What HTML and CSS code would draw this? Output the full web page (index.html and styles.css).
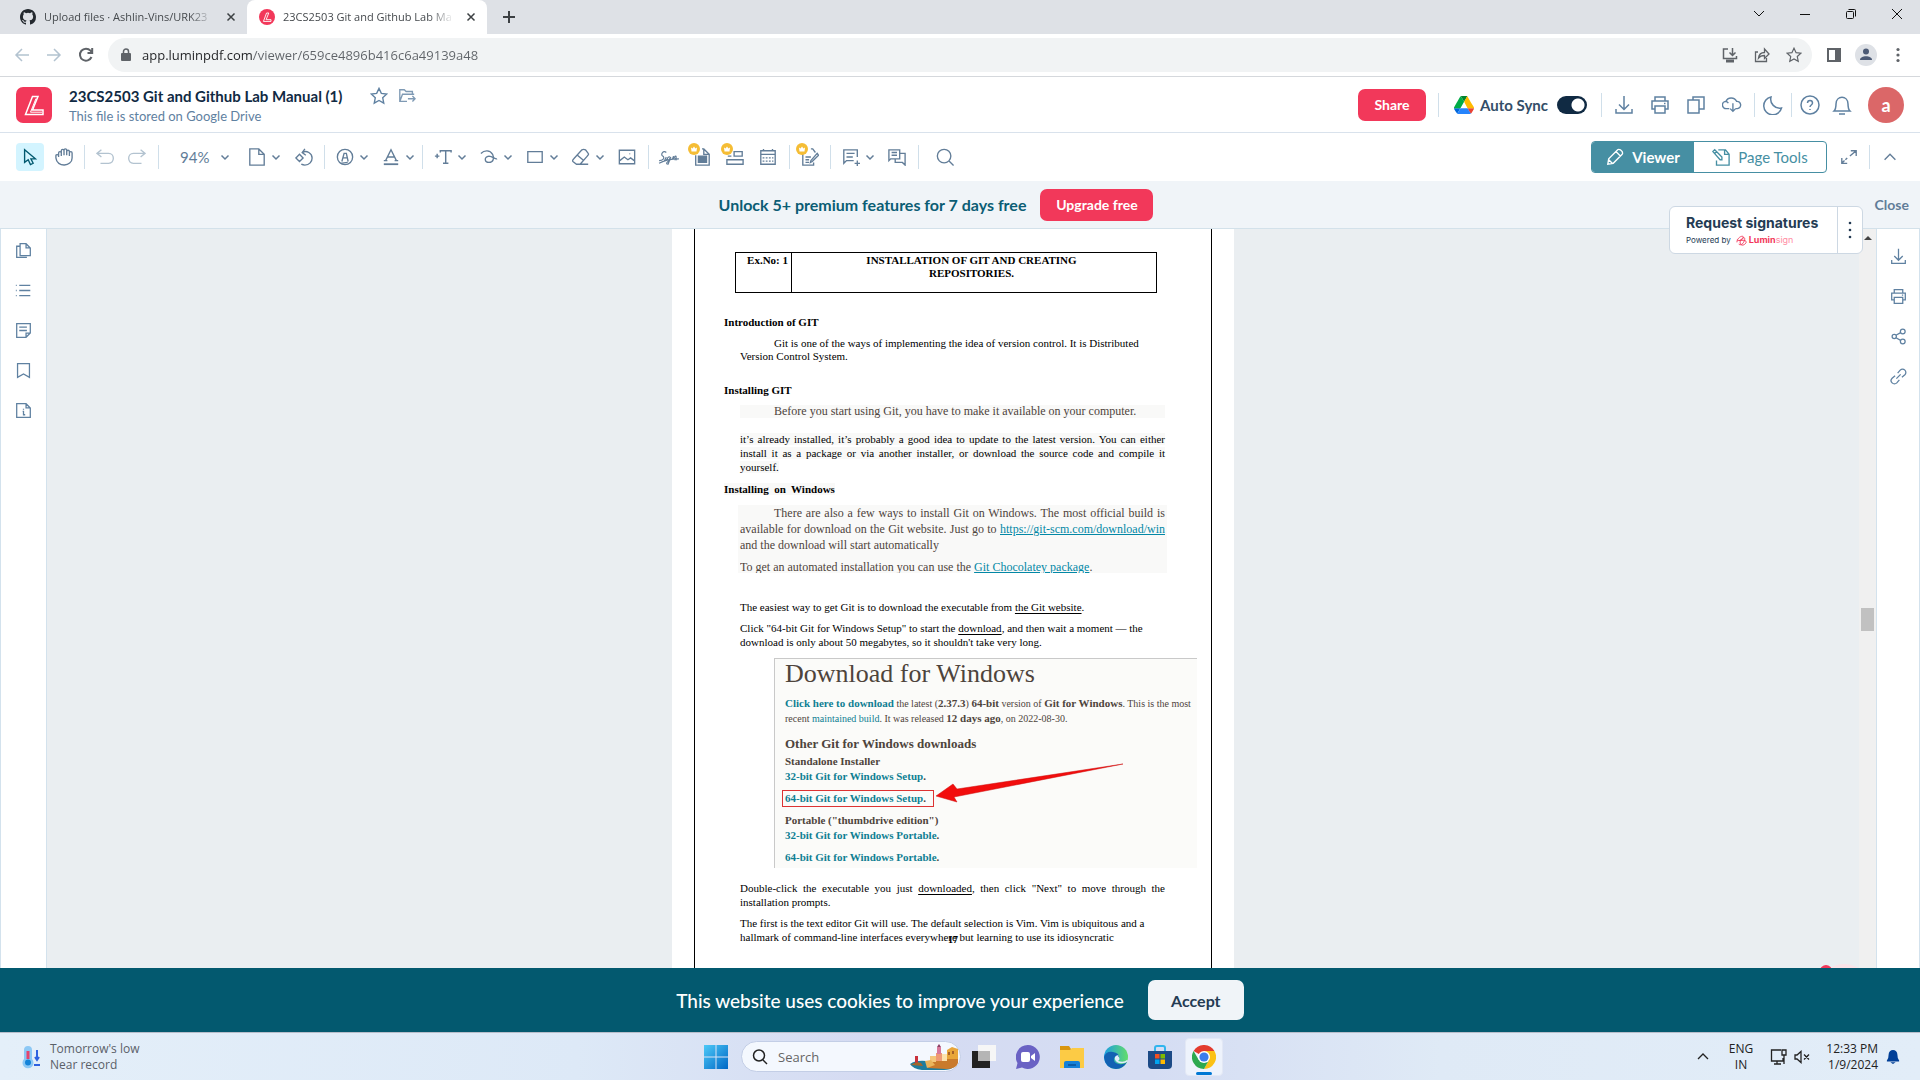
FILE: index.html
```html
<!DOCTYPE html>
<html lang="en">
<head>
<meta charset="utf-8">
<title>23CS2503 Git and Github Lab Manual (1)</title>
<link rel="stylesheet" href="styles.css">
</head>
<body>
<svg class="sprite" aria-hidden="true">
  <symbol id="chev" viewBox="0 0 10 10"><path d="M1.5 3.5 5 7l3.500-3.500"/></symbol>
  <symbol id="close" viewBox="0 0 10 10"><path d="m1.500 1.500 7 7m0-7-7 7"/></symbol>
  <symbol id="download" viewBox="0 0 20 20"><path d="M10 1v13M5 9.500l5 5 5-5M2 14v4h16v-4"/></symbol>
  <symbol id="printer" viewBox="0 0 20 20"><path d="M5 6V2h10v4M5 14H2V6h16v8h-3M5 11h10v7H5zM14 8.500h1.500"/></symbol>
  <symbol id="star" viewBox="0 0 20 20"><path d="m10 1.500 2.600 5.600 6 .700-4.500 4.100 1.200 6L10 15l-5.300 2.900 1.200-6L1.400 7.800l6-.700z"/></symbol>
  <symbol id="crown" viewBox="0 0 12 12"><circle cx="6" cy="6" r="6" fill="#f5bd35" stroke="none"/><path d="M3 4.500 4.600 5.500 6 3.500l1.400 2L9 4.500 8.500 8.500h-5z" fill="#fff" stroke="none"/></symbol>
</svg>

<nav class="tabs" aria-label="Browser tabs">
  <div class="tab">
    <svg class="fav" viewBox="0 0 16 16"><path fill="#24292f" stroke="none" d="M8 0C3.580 0 0 3.580 0 8c0 3.540 2.290 6.530 5.470 7.590.400.070.550-.170.550-.380 0-.190-.010-.820-.010-1.490-2.010.370-2.530-.490-2.690-.940-.090-.230-.480-.940-.820-1.130-.280-.150-.680-.520-.010-.530.630-.010 1.080.580 1.230.820.720 1.210 1.870.870 2.330.660.070-.520.280-.870.510-1.070-1.780-.200-3.640-.890-3.640-3.950 0-.870.310-1.590.820-2.150-.080-.200-.360-1.020.080-2.120 0 0 .670-.210 2.200.820a7.600 7.600 0 0 1 4 0c1.530-1.040 2.200-.820 2.200-.820.440 1.100.160 1.920.080 2.120.510.560.820 1.270.820 2.150 0 3.070-1.870 3.750-3.650 3.950.290.250.540.730.540 1.480 0 1.070-.010 1.930-.010 2.200 0 .210.150.460.550.380A8 8 0 0 0 16 8c0-4.420-3.580-8-8-8z"/></svg>
    <span class="tab-text">Upload files · Ashlin-Vins/URK23</span>
    <button class="x" aria-label="Close tab"><svg><use href="#close"/></svg></button>
  </div>
  <div class="tab active">
    <svg class="fav" viewBox="0 0 36 36"><circle cx="18" cy="18" r="18" fill="#f2385a" stroke="none"/><path d="M17 9h5l-6 15h11v4H10z" stroke="#fff" stroke-width="2"/></svg>
    <span class="tab-text">23CS2503 Git and Github Lab Ma</span>
    <button class="x" aria-label="Close tab"><svg><use href="#close"/></svg></button>
  </div>
  <button class="newtab" aria-label="New tab"><svg viewBox="0 0 14 14"><path d="M7 1v12M1 7h12"/></svg></button>
  <div class="win">
    <button aria-label="Search tabs"><svg viewBox="0 0 12 12"><path d="m1 3 5 5 5-5"/></svg></button>
    <button aria-label="Minimize"><svg viewBox="0 0 12 12"><path d="M1 6.500h10"/></svg></button>
    <button aria-label="Restore"><svg viewBox="0 0 12 12"><rect x="1.500" y="3.500" width="7" height="7" rx="1"/><path d="M3.500 1.500h6a1 1 0 0 1 1 1v6"/></svg></button>
    <button aria-label="Close window"><svg viewBox="0 0 12 12"><path d="m1 1 10 10M11 1 1 11"/></svg></button>
  </div>
</nav>

<div class="address">
  <div class="navbtns">
    <button class="dim" aria-label="Back"><svg viewBox="0 0 16 16"><path d="M15 8H2m6-6L2 8l6 6"/></svg></button>
    <button class="dim" aria-label="Forward"><svg viewBox="0 0 16 16"><path d="M1 8h13M8 2l6 6-6 6"/></svg></button>
    <button aria-label="Reload"><svg viewBox="0 0 16 16"><path d="M13.500 10a6 6 0 1 1-1-6.300L14 5.500M14.200 1v5H9.500" stroke-width="2"/></svg></button>
  </div>
  <div class="omnibox">
    <svg class="lock" viewBox="0 0 12 14"><rect x="1" y="5" width="10" height="8" rx="1" fill="#5f6368" stroke="none"/><path d="M3.500 6V3.500a2.500 2.500 0 0 1 5 0V6"/></svg>
    <input class="url" type="text" aria-label="Address" value="app.luminpdf.com/viewer/659ce4896b416c6a49139a48">
    <button aria-label="Install app"><svg viewBox="0 0 16 16"><path d="M6 2H1.500v9.500h13V9M10.500 1v7M7.500 5.500l3 3 3-3"/><path d="M4 14h8" stroke-width="3"/></svg></button>
    <button aria-label="Share page"><svg viewBox="0 0 16 16"><path d="M4 5H1.500v9.500h11V11M4.500 11c.500-4 3-5.500 6-5.500V2L15 7l-4.500 4.500V8.500c-3 0-4.500.500-6 2.500z" stroke-width="1.300"/></svg></button>
    <button aria-label="Bookmark"><svg><use href="#star"/></svg></button>
  </div>
  <div class="navbtns end">
    <button aria-label="Side panel"><svg viewBox="0 0 16 16"><path d="M2 2h12v12H2z" stroke-width="2"/><path d="M9 2h5v12H9z" fill="#5f6368" stroke="none"/></svg></button>
    <button aria-label="Profile"><svg class="person" viewBox="0 0 22 22"><circle cx="11" cy="11" r="11" fill="#dee1e6" stroke="none"/><circle cx="11" cy="7.500" r="3" fill="#4c5a75" stroke="none"/><path d="M5 16c0-5 12-5 12 0z" fill="#4c5a75" stroke="none"/></svg></button>
    <button aria-label="Menu"><svg viewBox="0 0 16 16"><g fill="#5f6368" stroke="none"><circle cx="8" cy="2.500" r="1.600"/><circle cx="8" cy="8" r="1.600"/><circle cx="8" cy="13.500" r="1.600"/></g></svg></button>
  </div>
</div>

<header class="appbar">
  <a class="logo" href="#" aria-label="Lumin"><svg viewBox="0 0 36 36"><path d="M16.500 9.500H22L16.500 23H27v4.500H9.500z" stroke="#fff" stroke-width="1.500"/><path d="m20 11.500-5.500 13.700H26" stroke="#fff" stroke-width="1"/></svg></a>
  <div class="doc">
    <div class="doc-top"><h1>23CS2503 Git and Github Lab Manual (1)</h1>
      <button aria-label="Star"><svg><use href="#star"/></svg></button>
      <button aria-label="Move"><svg viewBox="0 0 20 20"><path d="M10 16H2V3h5l2 2h7v3M2 16 5 8h13M11 13h8m-3-3 3 3-3 3" opacity=".8"/></svg></button>
    </div>
    <p>This file is stored on Google Drive</p>
  </div>
  <button class="share">Share</button>
  <i class="sep tall"></i>
  <svg class="drive" viewBox="0 0 87 78"><g stroke="none"><path fill="#0066da" d="m7 67 4 6c1 2 2 3 3 4l14-24H0c0 2 0 3 1 4z"/><path fill="#00ac47" d="M44 25 30 1c-2 1-3 2-4 3L1 48c-1 2-1 3-1 5h28z"/><path fill="#ea4335" d="M73 77c2-1 3-2 4-4l9-16c1-1 1-3 1-4H59l6 12z"/><path fill="#00832d" d="M44 25 58 1c-2-1-3-1-5-1H34c-1 0-3 0-4 1z"/><path fill="#2684fc" d="M59 53H28L14 77c1 1 3 1 4 1h51c2 0 3 0 4-1z"/><path fill="#ffba00" d="M73 27 60 4c-1-1-2-2-3-3L44 25l15 28h28c0-2 0-3-1-5z"/></g></svg>
  <label class="sync">Auto Sync <input type="checkbox" checked></label>
  <i class="sep tall"></i>
  <div class="acts">
    <button aria-label="Download"><svg><use href="#download"/></svg></button>
    <button aria-label="Print"><svg><use href="#printer"/></svg></button>
    <button aria-label="Copy"><svg viewBox="0 0 20 20"><path d="M2 5h11v13H2zM7 5V2h11v12h-5"/></svg></button>
    <button aria-label="Cloud save"><svg viewBox="0 0 22 20"><path d="M8 14H5a4 4 0 0 1-1-8c1 0 2 .500 3 2M4.500 6C6 1 14 1 16 6a4 4 0 0 1 1 8h-2M12 8v9m-3-3 3 3 3-3"/></svg></button>
  </div>
  <i class="sep tall"></i>
  <button class="one" aria-label="Dark mode"><svg viewBox="0 0 20 20"><path d="M8 2a9 9 0 0 0 10.500 11A9 9 0 1 1 8 2z"/></svg></button>
  <i class="sep tall"></i>
  <div class="acts tight">
    <button aria-label="Help"><svg viewBox="0 0 20 20"><circle cx="10" cy="10" r="9"/><path d="M7.500 8c0-3.500 5-3.500 5 0 0 2-2.500 2-2.500 4M10 14v1"/></svg></button>
    <button aria-label="Notifications"><svg viewBox="0 0 20 20"><path d="M2 16h16c-2-2-2-4-2-7 0-9-12-9-12 0 0 3 0 5-2 7zM7 19h6"/></svg></button>
  </div>
  <button class="me">a</button>
</header>

<div class="tools" role="toolbar">
  <button class="t on" aria-label="Pointer"><svg viewBox="0 0 20 20"><path d="M4 2v14l4-3 2.500 5.500 3-1.500-2.500-5h5z"/></svg></button>
  <button class="t" aria-label="Pan"><svg viewBox="0 0 20 20"><path d="M4 10V5.500a1.500 1.500 0 0 1 3 0V3a1.500 1.500 0 0 1 3 0v-.500a1.500 1.500 0 0 1 3 0V4a1.500 1.500 0 0 1 3 0v1.500a1.500 1.500 0 0 1 3 0V11c0 10-17 11-18 0V8.500C1 7 4 7 4 9M7 5v4M10 3v5M13 3v5M16 5v4"/></svg></button>
  <i class="sep"></i>
  <div class="grp g4 dim">
    <button class="t" aria-label="Undo"><svg viewBox="0 0 20 20"><path d="M6 2 1 6l5 4M1.500 6H14c7 0 7 11 0 11H5"/></svg></button>
    <button class="t" aria-label="Redo"><svg viewBox="0 0 20 20"><path d="m14 2 5 4-5 4M18.500 6H6c-7 0-7 11 0 11h9"/></svg></button>
  </div>
  <i class="sep"></i>
  <label class="zoom"><select aria-label="Zoom"><option>94%</option></select><svg class="c"><use href="#chev"/></svg></label>
  <button class="t d" aria-label="Page"><svg viewBox="0 0 20 20"><path d="M2 1h10l6 6v12H2zM12 1v6h6"/></svg><svg class="c"><use href="#chev"/></svg></button>
  <button class="t" aria-label="Rotate"><svg viewBox="0 0 20 20"><path d="m1 11 4-4 4 4-4 4zM8 5c5-3 11 1 11 6 0 4-3 8-8 8-2 0-3-.500-4-1M11 1 8 5l4 3"/></svg></button>
  <i class="sep"></i>
  <div class="grp">
    <button class="t d" aria-label="Highlight"><svg viewBox="0 0 20 20"><circle cx="10" cy="10" r="8.500"/><path d="M6.500 15 9 6h2.500l2 9M8 11h5M5 17l8-1"/></svg><svg class="c"><use href="#chev"/></svg></button>
    <button class="t d" aria-label="Text colour"><svg viewBox="0 0 20 20"><path d="m4 14 6-12 6 12M6 10h8M2 14h4m8 0h4"/><path d="M2 18h16" stroke-width="2"/></svg><svg class="c"><use href="#chev"/></svg></button>
  </div>
  <i class="sep"></i>
  <div class="grp">
    <button class="t d" aria-label="Add text"><svg viewBox="0 0 20 20"><path d="M1 9h5M3.500 6.500v5M7 5V3h12v2M13 3v14M10 17h6" stroke-width="1.600"/></svg><svg class="c"><use href="#chev"/></svg></button>
    <button class="t d" aria-label="Draw"><svg viewBox="0 0 20 20"><path d="M1 6c4-4 10-4 13 1 2 4 1 9-4 9S4 10 10 9c4 0 7 4 9 3"/></svg><svg class="c"><use href="#chev"/></svg></button>
    <button class="t d" aria-label="Shape"><svg viewBox="0 0 20 20"><path d="M2 4h16v12H2z"/></svg><svg class="c"><use href="#chev"/></svg></button>
    <button class="t d" aria-label="Eraser"><svg viewBox="0 0 20 20"><path d="m2 12 9-10q2-1 4 0l3 4q1 1-1 3l-8 9H5l-4-3q-1-1 1-3zM6 8l7 6M9 18h9"/></svg><svg class="c"><use href="#chev"/></svg></button>
    <button class="t" aria-label="Image"><svg viewBox="0 0 20 20"><path d="M1.500 2.500h17v15h-17zM2 14l5-4 4 3 3-2 4 3M13 6v1"/></svg></button>
  </div>
  <i class="sep"></i>
  <div class="grp g5">
    <button class="t" aria-label="Sign"><svg class="wide" viewBox="0 0 24 20"><path d="M9 5C6 2 2 7 5 9s0 5-4 5M1 17C8 13 15 12 23 12M9 10l-2 4q1 1 3-2M13 10c-3-1-4 4-1 3l2-3-3 8c-4 0 0-4 5-6l1-3-1 4 3-4q2 0 0 4h2" stroke-width="1.300"/></svg></button>
    <button class="t crowned" aria-label="Protect"><svg viewBox="0 0 20 20"><path d="M3 8v11h15V7l-6-6h-2M12 1v6h6" /><path d="M6 9h9v7H6z" fill="#627d98"/></svg><svg class="crown"><use href="#crown"/></svg></button>
    <button class="t crowned" aria-label="Form fields"><svg viewBox="0 0 20 20"><path d="M9 4h9v5H9zM1 13h18v5H1zM2 9h4"/></svg><svg class="crown"><use href="#crown"/></svg></button>
    <button class="t" aria-label="Date"><svg viewBox="0 0 20 20"><path d="M2 3h16v15H2zM2 7h16M5 1v3M15 1v3"/><path d="M4 11h12M4 14.500h12" stroke-dasharray="2 1.500"/></svg></button>
  </div>
  <i class="sep"></i>
  <button class="t crowned" aria-label="Edit text"><svg viewBox="0 0 20 20"><path d="M2 6v13h12v-3M11 1h2l3 4M5 10h6M5 13h4M5 16h4M11 14l7-8 1.500 2-7 7-2 1z"/></svg><svg class="crown"><use href="#crown"/></svg></button>
  <i class="sep"></i>
  <div class="grp">
    <button class="t d" aria-label="Comment"><svg viewBox="0 0 20 20"><path d="M13 14H5l-3 3V2h15v8M5 6h9M5 10h7M17 14v6M14 17h6"/></svg><svg class="c"><use href="#chev"/></svg></button>
    <button class="t" aria-label="Comments"><svg viewBox="0 0 20 20"><path d="M5 12H3l-2 2V2h12v10H5M4 5h6M4 8h6M8 12v4h8l3 3V6h-6"/></svg></button>
  </div>
  <i class="sep"></i>
  <button class="t find" aria-label="Search"><svg viewBox="0 0 20 20"><circle cx="9" cy="9" r="7.500"/><path d="m14.500 14.500 5 5"/></svg></button>
  <div class="mode">
    <button class="viewer"><svg viewBox="0 0 20 20"><path d="m2 18 1-6L13 2q1-1 3 0l2 2q1 2 0 3L8 17zM11 4l5 5M3 13l4 4"/></svg>Viewer</button>
    <button class="pagetools"><svg viewBox="0 0 20 20"><path d="M5 14v5h14V7l-4-5H7M14 2v5h5M1 4l2-2 8 8v3H9zM3 6l2-2"/></svg>Page Tools</button>
  </div>
  <button class="one" aria-label="Full screen"><svg viewBox="0 0 20 20"><path d="M12 3h6v6M18 3l-7 6M8 17H2v-6M2 17l3-3m1-1 2-2"/></svg></button>
  <i class="sep"></i>
  <button class="t up" aria-label="Collapse"><svg viewBox="0 0 20 20"><path d="m4 13 6-6 6 6"/></svg></button>
</div>

<div class="promo">
  <span>Unlock 5+ premium features for 7 days free</span>
  <button class="upgrade">Upgrade free</button>
  <button class="dismiss">Close</button>
  <div class="signbox">
    <div class="sign-l"><b>Request signatures</b><small>Powered by <svg viewBox="0 0 12 12"><path d="M1 8c0-5 6-8 7-6S3 8 1 5m2 5c4 3 8-6 6-7S3 7 5 10s7-1 6-3-5-1-8-1" stroke="#f2385a" stroke-width="1"/></svg><em>Lumin<i>sign</i></em></small></div>
    <button aria-label="More"><svg viewBox="0 0 4 18"><g fill="#243b53" stroke="none"><circle cx="2" cy="2" r="1.300"/><circle cx="2" cy="9" r="1.300"/><circle cx="2" cy="16" r="1.300"/></g></svg></button>
  </div>
</div>

<main class="main">
  <aside class="rail left">
    <button aria-label="Pages"><svg viewBox="0 0 20 20"><path d="M6 2h7l5 5v9H6zM13 2v5h5M6 5H2v13h12"/></svg></button>
    <button aria-label="Outline"><svg viewBox="0 0 20 20"><path d="M5 4h13M5 10h13M5 16h13M1 4h1M1 10h1M1 16h1"/></svg></button>
    <button aria-label="Notes"><svg viewBox="0 0 20 20"><path d="M2 2h16v11l-5 5H2zM18 13h-5v5M5 6h9M5 10h9"/></svg></button>
    <button aria-label="Bookmarks"><svg viewBox="0 0 20 20"><path d="M3 2h14v16l-7-4-7 4z"/></svg></button>
    <button aria-label="Info"><svg viewBox="0 0 20 20"><path d="M2 2h11l5 5v11H2zM13 2v5h5M10 8v1M9 11h1v4h2"/></svg></button>
  </aside>
  <section class="canvas">
    <article class="page"><div class="frame">
      <table class="ex"><tr><th class="no">Ex.No: 1</th><th>INSTALLATION OF GIT AND CREATING<br>REPOSITORIES.</th></tr></table>
      <h2 class="h-intro">Introduction of GIT</h2>
      <p class="ind l13">Git is one of the ways of implementing the idea of version control. It is Distributed Version Control System.</p>
      <h2 class="h-inst">Installing GIT</h2>
      <p class="ind l13 cam tint">Before you start using Git, you have to make it available on your computer.</p>
      <p class="just upd"><span class="tint">it’s already installed, it’s probably a good idea to update to the latest version. You can either install it as a package or via another installer, or download the source code and compile it yourself.</span></p>
      <h2 class="h-win"><span class="tint">Installing&nbsp; on&nbsp; Windows</span></h2>
      <div class="note tint cam">
        <p class="ind just">There are also a few ways to install Git on Windows. The most official build is available for download on the Git website. Just go to <a href="#">https://git-scm.com/download/win</a> and the download will start automatically</p>
        <p class="cut">To get an automated installation you can use the <a href="#">Git Chocolatey package</a>.</p>
      </div>
      <p class="easy">The easiest way to get Git is to download the executable from <u>the Git website</u>.</p>
      <p>Click "64-bit Git for Windows Setup" to start the <u>download</u>, and then wait a moment — the download is only about 50 megabytes, so it shouldn't take very long.</p>
      <div class="shot">
        <h3>Download for Windows</h3>
        <p><a href="#"><b>Click here to download</b></a> the latest (<b>2.37.3</b>) <b>64-bit</b> version of <b>Git for Windows</b>. This is the most<br>recent <a href="#">maintained build</a>. It was released <b>12 days ago</b>, on 2022-08-30.</p>
        <h4>Other Git for Windows downloads</h4>
        <h5>Standalone Installer</h5>
        <h6><a href="#">32-bit Git for Windows Setup</a>.</h6>
        <h6 class="boxed"><a href="#">64-bit Git for Windows Setup</a>.</h6>
        <h5>Portable ("thumbdrive edition")</h5>
        <h6><a href="#">32-bit Git for Windows Portable</a>.</h6>
        <h6><a href="#">64-bit Git for Windows Portable</a>.</h6>
        <svg class="arrow" viewBox="0 0 190 44"><path d="M188 2 22 27l-4-5L1 34l21 6-3-5z" fill="#f20d0d" stroke="#c11" stroke-width=".5"/></svg>
      </div>
      <p class="just dbl">Double-click the executable you just <u>downloaded</u>, then click "Next" to move through the installation prompts.</p>
      <p class="last">The first is the text editor Git will use. The default selection is Vim. Vim is ubiquitous and a hallmark of command-line interfaces everywhere but learning to use its idiosyncratic</p>
      <b class="folio">17</b>
    </div></article>
    <i class="chat"></i>
  </section>
  <div class="scroll"><svg viewBox="0 0 8 5"><path d="M0 5 4 1l4 4z" fill="#444" stroke="none"/></svg><i></i></div>
  <aside class="rail right">
    <button aria-label="Download"><svg><use href="#download"/></svg></button>
    <button aria-label="Print"><svg><use href="#printer"/></svg></button>
    <button aria-label="Share"><svg viewBox="0 0 20 20"><circle cx="5" cy="10" r="2.500"/><circle cx="15" cy="4" r="2.800"/><circle cx="15" cy="16" r="2.800"/><path d="m7 8.500 5.500-3M7 11.500l5.500 3"/></svg></button>
    <button aria-label="Copy link"><svg viewBox="0 0 20 20"><path d="m7.500 12.500 5-5M9 6l3-3.500a3.500 3.500 0 0 1 5.500 5.500L14 11M11 14l-3 3.500A3.500 3.500 0 0 1 2.500 12L6 9"/></svg></button>
  </aside>
</main>

<div class="cookies"><span>This website uses cookies to improve your experience</span><button>Accept</button></div>

<footer class="taskbar">
  <div class="weather">
    <svg viewBox="0 0 20 24"><path d="M3 5a4 4 0 0 1 8 0v9a5.500 5.500 0 1 1-8 0z" fill="#8cc8f5" stroke="none"/><path d="M7 6v8" stroke="#e5446d" stroke-width="3"/><circle cx="7" cy="17.500" r="3" fill="#1583d8" stroke="none"/><path d="M16 5v9m-2-2 2 3 2-3M13 20h6" stroke="#2f62e0" stroke-width="2"/></svg>
    <span>Tomorrow's low<br>Near record</span>
  </div>
  <div class="apps">
    <button class="app" aria-label="Start"><svg viewBox="0 0 24 24"><defs><linearGradient id="w" x2="1" y2="1"><stop stop-color="#4cc9f8"/><stop offset="1" stop-color="#0067c5"/></linearGradient></defs><path d="M0 0h11.500v11.500H0zM12.500 0H24v11.500H12.500zM0 12.500h11.500V24H0zM12.500 12.500H24V24H12.500z" fill="url(#w)" stroke="none"/></svg></button>
    <label class="find-box"><svg class="mag" viewBox="0 0 16 16"><circle cx="7" cy="6.500" r="5.500"/><path d="m11 11 4 4"/></svg><input type="text" placeholder="Search" aria-label="Search">
      <svg class="town" viewBox="0 0 48 26"><g stroke="none"><path d="M0 20q6-4 16-3h32l-4 6q-4 3-10 3H12Q3 25 0 20z" fill="#1e7d9d"/><path d="M18 24q2-8 12-8l18-7v10q-2 6-12 6z" fill="#c97a2c"/><path d="M20 12h6v6h-6z" fill="#f3c77c"/><path d="M26 9h6v8h-6z" fill="#ef9a75"/><path d="M32 10h5v7h-5z" fill="#fbe2ad"/><path d="M37 6l5-3 6 2v10H37z" fill="#e9a63a"/><path d="M38 8h2v3h-2zM42 7h2v3h-2z" fill="#a5622a"/><path d="M27 3h4v7h-4z" fill="#d8799b"/><path d="M29 0l2 3h-4z" fill="#8b3f63"/><path d="M5 12h3v7H5z" fill="#c9313c"/><path d="M1 21q5-4 10-2l2 3z" fill="#a0672c"/><path d="M15 17l6-1 4 5-8 3z" fill="#eab45b"/></g></svg></label>
    <button class="app" aria-label="Task view"><svg viewBox="0 0 24 24"><g stroke="none"><path d="M6 0h18v16H6z" fill="#f6f6f6"/><path d="M0 6h18v17H0z" fill="#222"/><path d="M6 6h12v10H6z" fill="#b5b5b5"/></g></svg></button>
    <button class="app" aria-label="Chat"><svg viewBox="0 0 24 24"><g stroke="none"><path d="M12 0a12 12 0 1 1-6 22.500L0 24l1.500-6A12 12 0 0 1 12 0z" fill="#6a62c4"/><rect x="5" y="7" width="9" height="10" rx="2" fill="#fff"/><path d="m15 11 4-3v8l-4-3z" fill="#fff"/></g></svg></button>
    <button class="app" aria-label="File Explorer"><svg viewBox="0 0 24 24"><g stroke="none"><path d="M0 1h9l2 3h13v6H0z" fill="#d9960f"/><path d="M0 5h10l2-2h12v20H0z" fill="#fccb45"/><path d="M4 23v-5q0-2 2-2h12q2 0 2 2v5z" fill="#1681d8"/><path d="M8 19h8v2H8z" fill="#0c5ca8"/></g></svg></button>
    <button class="app" aria-label="Edge"><svg viewBox="0 0 24 24"><defs><linearGradient id="e" x2="1"><stop stop-color="#1b9de2"/><stop offset="1" stop-color="#63dd6a"/></linearGradient></defs><g stroke="none"><circle cx="12" cy="12" r="12" fill="url(#e)"/><path d="M0 12Q2 6 9 7q6 1 6 5-3-2-5 1-1 5 5 6 4 1 8-2-4 7-11 7Q1 23 0 12z" fill="#1261b3"/><path d="M14 11q3 3 0 5 6 2 9-1l1 1q-3 3-9 2-5-2-4-6 2-3 4-1z" fill="#e3ecfa"/></g></svg></button>
    <button class="app" aria-label="Store"><svg viewBox="0 0 24 24"><path d="M7 7V3q0-2 2-2h6q2 0 2 2v4" stroke="#30b5ee" stroke-width="2"/><path d="M0 6h24v14q0 4-4 4H4q-4 0-4-4z" fill="#1c4a86" stroke="none"/><g stroke="none"><path d="M7 9h4.500v4.500H7z" fill="#f25022"/><path d="M12.500 9H17v4.500h-4.500z" fill="#7fba00"/><path d="M7 14.500h4.500V19H7z" fill="#00a4ef"/><path d="M12.500 14.500H17V19h-4.500z" fill="#ffb900"/></g></svg></button>
    <button class="app current" aria-label="Chrome"><svg viewBox="0 0 24 24"><g stroke="none"><path d="M12 12 1.600 6A12 12 0 0 1 22.400 6z" fill="#e33b2e"/><path d="M12 12V6h10.400A12 12 0 0 1 12 24l5-9z" fill="#fbc116"/><path d="M12 12l5 3-5 9A12 12 0 0 1 1.600 6l5.200 9z" fill="#2da94f"/><circle cx="12" cy="12" r="6" fill="#fff"/><circle cx="12" cy="12" r="4.600" fill="#3b7ded"/></g></svg></button>
  </div>
  <div class="tray">
    <svg class="cu" viewBox="0 0 12 12"><path d="m1 8 5-5 5 5"/></svg>
    <span class="lang">ENG<br>IN</span>
    <svg class="net" viewBox="0 0 18 18"><path d="M11 2H1.500v11H13V10M7 13v3M4 16h7M12 2h4v5h-4zM14 7v9"/></svg>
    <svg class="vol" viewBox="0 0 18 14"><path d="M1 5h2l4-3.500v11L3 9H1zM10 4.500l5 5m0-5-5 5"/></svg>
    <span class="clock">12:33 PM<br>1/9/2024</span>
    <svg class="bell" viewBox="0 0 16 18"><path d="M1 13q2-2 2-7a5 5 0 0 1 10 0q0 5 2 7v1H1zM5 15h6l-3 2z" fill="#013f97" stroke="none"/></svg>
  </div>
</footer>
</body>
</html>
```
FILE: styles.css
```css
* { box-sizing: border-box; }
body {
  margin: 0;
  height: 100vh;
  display: flex;
  flex-direction: column;
  overflow: hidden;
  font-family: "Lato", "Open Sans", sans-serif;
  color: #102a43;
  background: #fff;
}
h1, h2, h3, h4, h5, h6, p { margin: 0; }
button, input, select { font: inherit; color: inherit; }
button {
  display: inline-flex; align-items: center; justify-content: center;
  border: 0; background: none; padding: 0; flex: none;
}
svg { fill: none; stroke: currentColor; stroke-width: 1.5; width: 20px; height: 20px; flex: none; }
.sprite { position: absolute; width: 0; height: 0; }

/* browser chrome */
.tabs { display: flex; height: 34px; flex: none; background: #dee1e6; font: 11px/16px "Open Sans", sans-serif; color: #45494d; }
.tab { display: flex; align-items: center; width: 240px; padding: 0 8px 0 12px; }
.tab:first-child { margin-left: 8px; width: 239px; }
.tab.active { background: #fff; border-radius: 8px 8px 0 0; }
.fav { width: 16px; height: 16px; margin-right: 8px; }
.tab-text { flex: 1; min-width: 0; overflow: hidden; white-space: nowrap; mask-image: linear-gradient(90deg, #000 85%, transparent); }
.x { width: 16px; height: 16px; margin-left: 9px; color: #3c4043; }
.x svg { width: 10px; height: 10px; }
.newtab { width: 44px; height: 34px; color: #3c4043; }
.newtab svg { width: 14px; height: 14px; stroke-width: 2; }
.win { display: flex; margin-left: auto; color: #111; }
.win button { width: 46px; height: 28px; }
.win svg { width: 12px; height: 12px; stroke-width: 1; }
.address { display: flex; align-items: center; height: 43px; flex: none; padding: 0 6px; border-bottom: 1px solid #d5d8dc; color: #5f6368; }
.navbtns { display: flex; }
.navbtns button { width: 32px; height: 32px; }
.navbtns svg { width: 16px; height: 16px; }
.navbtns .person { width: 22px; height: 22px; }
.dim { color: #b0bac3; }
.omnibox { display: flex; align-items: center; flex: 1; height: 34px; margin: 0 6px; padding: 0 2px 0 12px; border-radius: 17px; background: #f1f3f4; }
.omnibox button { width: 32px; height: 32px; }
.omnibox button svg { width: 16px; height: 16px; }
.lock { width: 12px; height: 14px; }
.url {
  flex: 1; min-width: 0; border: 0; outline: 0; padding: 0; margin-left: 10px; height: 24px;
  font: 13px/24px "Open Sans", sans-serif; color: transparent;
  background: linear-gradient(90deg, #202124 110px, #5f6368 110px); background-clip: text; -webkit-background-clip: text;
}

/* app header */
.appbar { display: flex; align-items: center; height: 56px; flex: none; padding: 0 16px; border-bottom: 1px solid #d9e2ec; color: #5f81a1; }
.logo { display: flex; border-radius: 7px; background: #f2385a; }
.logo svg { width: 36px; height: 36px; }
.doc { flex: 1; margin-left: 17px; }
.doc-top { display: flex; align-items: center; height: 22px; gap: 10px; }
.doc-top svg { width: 18px; height: 18px; }
.doc-top h1 { margin-right: 18px; font: 700 15px/22px "Lato", sans-serif; color: #102a43; }
.doc p { font-size: 13px; line-height: 18px; }
.share { width: 68px; height: 32px; border-radius: 7px; background: #f2385a; color: #fff; font-size: 14px; font-weight: 700; }
.sep { width: 1px; height: 24px; margin: 0 6px; background: #d0dfea; flex: none; }
.sep.tall { margin: 0 12px; }
.drive { width: 20px; height: 18px; margin: 0 6px 0 3px; }
.sync { display: flex; align-items: center; gap: 9px; margin-right: 2px; font-size: 15px; font-weight: 700; color: #334e68; }
.sync input { appearance: none; width: 30px; height: 18px; margin: 0; border-radius: 9px; background: radial-gradient(circle at 21px 9px, #fff 6px, #102a43 7px); }
.acts { display: flex; gap: 16px; }
.acts button { width: 20px; height: 28px; }
.acts.tight { gap: 12px; }
.appbar .one { width: 20px; }
.appbar .one + .sep { margin: 0 8px; }
.appbar .acts + .sep { margin-right: 8px; }
.me { width: 36px; height: 36px; margin-left: 16px; border-radius: 50%; background: #db6768; color: #fff; font-size: 18px; font-weight: 700; }

/* tool bar */
.tools { display: flex; align-items: center; height: 48px; flex: none; padding: 0 16px; color: #627d98; }
.t { width: 28px; height: 28px; border-radius: 4px; }
.t + .t { margin-left: 6px; }
.grp .t { margin: 0; }
.t.on { background: #d3f4ff; color: #02596f; }
.t svg { width: 18px; height: 18px; }
.t.d { width: 38px; padding-left: 5px; justify-content: flex-start; gap: 5px; }
svg.c, .t svg.c { width: 10px; height: 10px; }
.t svg.wide { width: 24px; }
.grp { display: flex; gap: 8px; }
.grp.g4 { gap: 4px; }
.grp.g5 { gap: 5px; }
.grp + .sep { margin-left: 7px; }
.dim { color: #b3c3d0; }
.zoom { display: flex; align-items: center; width: 84px; padding-left: 15px; }
.zoom select { appearance: none; border: 0; background: none; padding: 0; width: 40px; font-size: 15px; }
.zoom + .t { margin-left: -6px; }
.t.d + .t { margin-left: 9px; }
.grp .t.d + .t { margin-left: 0; }
.crowned { position: relative; }
.t svg.crown { position: absolute; left: 0; top: 0; width: 12px; height: 12px; }
.find { margin-left: 6px; }
.mode { display: flex; margin-left: auto; height: 32px; border: 1px solid #468fa3; border-radius: 4px; overflow: hidden; font-size: 15px; color: #468fa3; }
.mode button { gap: 8px; }
.mode svg { width: 18px; height: 18px; }
.viewer { width: 102px; background: #468fa3; color: #fff; font-weight: 700; }
.pagetools { width: 132px; }
.tools .one { width: 20px; margin: 0 4px 0 12px; }
.tools .one svg { width: 18px; height: 18px; }

/* promo strip */
.promo { position: relative; z-index: 2; display: flex; align-items: center; justify-content: center; height: 48px; flex: none; background: #f0f4f8; border-bottom: 1px solid #d3e1ea; font-size: 16px; font-weight: 700; color: #0b5d74; }
.upgrade { width: 113px; height: 32px; margin: 0 34px 0 14px; border-radius: 7px; background: #f2385a; color: #fff; font-size: 14px; font-weight: 700; }
.promo span { margin-left: -14px; }
.dismiss { position: absolute; right: 11px; top: 14px; font-size: 14px; line-height: 20px; color: #627d98; }
.signbox { position: absolute; right: 57px; top: 25px; display: flex; width: 194px; height: 48px; border: 1px solid #cdd8e3; border-radius: 6px; background: #fff; }
.sign-l { flex: 1; padding: 6px 0 0 16px; border-right: 1px solid #cdd8e3; font-family: "Inter", sans-serif; color: #243b53; }
.sign-l b { display: block; font-size: 14px; line-height: 20px; font-weight: 700; }
.sign-l small { display: flex; align-items: center; font-size: 8px; line-height: 14px; font-weight: 400; }
.sign-l small svg { width: 11px; height: 11px; margin: 0 2px 0 5px; }
.sign-l em { font: 700 9px/12px "Inter", sans-serif; color: #f2385a; }
.sign-l em i { font-style: normal; font-weight: 400; color: #ff8da3; }
.signbox button { width: 24px; }
.signbox button svg { width: 4px; height: 18px; }

/* viewer */
.main { display: flex; flex: 1; min-height: 0; }
.rail { display: flex; flex-direction: column; align-items: center; border: solid #d3e2ed; border-width: 0 1px; color: #5f81a1; }
.rail button { width: 28px; height: 40px; }
.rail svg { width: 17px; height: 17px; }
.rail.left { width: 47px; padding-top: 1px; }
.rail.right { width: 44px; padding-top: 7px; }
.canvas { position: relative; flex: 1; display: flex; justify-content: center; align-items: stretch; overflow: hidden; background: #eaeef1; }
.scroll { display: flex; flex-direction: column; align-items: center; width: 17px; background: #f0f0f0; }
.scroll svg { width: 8px; height: 5px; margin-top: 6px; }
.scroll i { width: 13px; height: 23px; margin-top: 368px; background: #c1c1c1; }
.chat { position: absolute; right: -13px; bottom: -52px; width: 56px; height: 56px; border-radius: 50%; background: #fbe3e8; }
.chat::before { content: ""; position: absolute; left: 4px; top: 1px; width: 12px; height: 12px; border-radius: 50%; background: #f2385a; }
.page { width: 562px; padding: 0 22px; background: #fff; font: 11px/14px "Liberation Serif", serif; color: #000; }
.frame { position: relative; height: 100%; padding: 23px 46px 0 45px; border: solid #000; border-width: 0 1px; }
.ex { width: 422px; height: 41px; margin-left: -5px; border-collapse: collapse; line-height: 13px; }
.ex th { border: 1px solid #000; padding: 1px 50px 0 45px; vertical-align: top; text-align: center; }
.ex .no { width: 56px; padding: 1px 3px 0 0; text-align: right; white-space: nowrap; }
.page h2 { margin-left: -16px; font-size: 11px; line-height: 14px; }
.h-intro { margin-top: 22px; }
.h-intro + p, .h-inst + p { margin-top: 8px; }
.h-inst { margin-top: 20px; }
.h-win { margin-top: 8px; }
.ind { text-indent: 34px; }
.l13 { line-height: 13px; }
.just { text-align: justify; }
.tint { background: #f9f9f8; }
.cam { font-size: 12px; color: #4e443c; }
.upd { margin-top: 14px; }
.note { margin: 9px -2px 0; padding: 0 2px; line-height: 16px; }
.cam a { color: #0388a6; }
.cut { height: 13px; line-height: 14px; margin-top: 7px; overflow: hidden; }
.easy { margin: 27px 0 7px; }
.frame u { text-underline-offset: 2px; }
.shot { position: relative; width: 423px; height: 210px; margin: 9px 0 13px 34px; padding: 0 0 0 10px; border: solid #c9c9c9; border-width: 1px 0 0 1px; background: #fbfbf9; white-space: nowrap; color: #4e443c; overflow: hidden; }
.shot a { color: #0f7f93; text-decoration: none; }
.shot h3 { font-weight: 400; font-size: 26px; line-height: 30px; }
.shot p { margin-top: 7px; font-size: 10px; line-height: 15px; }
.shot b { font-size: 11px; }
.shot h4 { margin-top: 10px; font-size: 13px; line-height: 16px; }
.shot h5, .shot h6 { font-size: 11px; line-height: 15px; }
.shot h5 { margin-top: 2px; }
.shot h6 + h6 { margin-top: 7px; }
.shot .boxed { width: 152px; margin: 6px 0 6px -3px; padding-left: 2px; border: 1px solid #d33; }
.shot h6.boxed + h5 { margin-top: 6px; }
.arrow { position: absolute; left: 160px; top: 103px; width: 190px; height: 44px; }
.dbl { margin-bottom: 7px; }
.folio { position: absolute; left: 0; right: 0; top: 704px; text-align: center; font-size: 10px; }

.cookies { display: flex; align-items: center; justify-content: center; gap: 24px; height: 64px; flex: none; background: #03596f; color: #fff; font-size: 19px; font-weight: 500; }
.cookies button { width: 96px; height: 40px; border-radius: 7px; background: #f0f4f8; color: #243b53; font-size: 16px; font-weight: 700; }

/* desktop task bar */
.taskbar { display: grid; grid-template-columns: 1fr auto 1fr; align-items: center; height: 48px; flex: none; border-top: 1px solid #b8bdca; background: linear-gradient(90deg, #e4eff9, #dde9f7 30%, #d5dbf2 45%, #d5ddf3 60%, #dfeaf6 75%, #e2edf8); font: 12px/16px "Open Sans", sans-serif; color: #5a6068; }
.weather { display: flex; align-items: center; gap: 9px; padding-left: 21px; }
.weather svg { width: 20px; height: 24px; }
.apps { display: flex; align-items: center; }
.app { width: 38px; height: 38px; margin: 0 3px; border-radius: 4px; position: relative; }
.app svg { width: 24px; height: 24px; }
.app.current { background: #eef3fc; border: 1px solid #e3e8f5; }
.app.current::after { content: ""; position: absolute; bottom: 0; width: 16px; height: 3px; border-radius: 2px; background: #0078d4; }
.find-box { display: flex; align-items: center; width: 220px; height: 31px; margin: 0 1px 0 3px; padding: 0 2px 0 10px; border: 1px solid #c3cee6; border-radius: 16px; background: #f4f8fe; color: #222; }
.mag { width: 16px; height: 16px; }
.find-box input { flex: 1; min-width: 0; border: 0; outline: 0; background: none; padding: 0 0 0 10px; font-size: 13px; }
.find-box input::placeholder { color: #666; opacity: 1; }
.town { width: 48px; height: 26px; }
.tray { display: flex; align-items: center; justify-content: flex-end; padding-right: 20px; color: #222; }
.tray svg { stroke-width: 1.3; }
.cu { width: 12px; height: 12px; margin-right: 20px; }
.lang { text-align: center; margin-right: 17px; }
.net { width: 18px; height: 18px; margin-right: 6px; }
.tray .vol { width: 18px; height: 14px; margin-right: 14px; }
.clock { text-align: right; }
.tray .bell { width: 14px; height: 16px; margin-left: 8px; }
```
